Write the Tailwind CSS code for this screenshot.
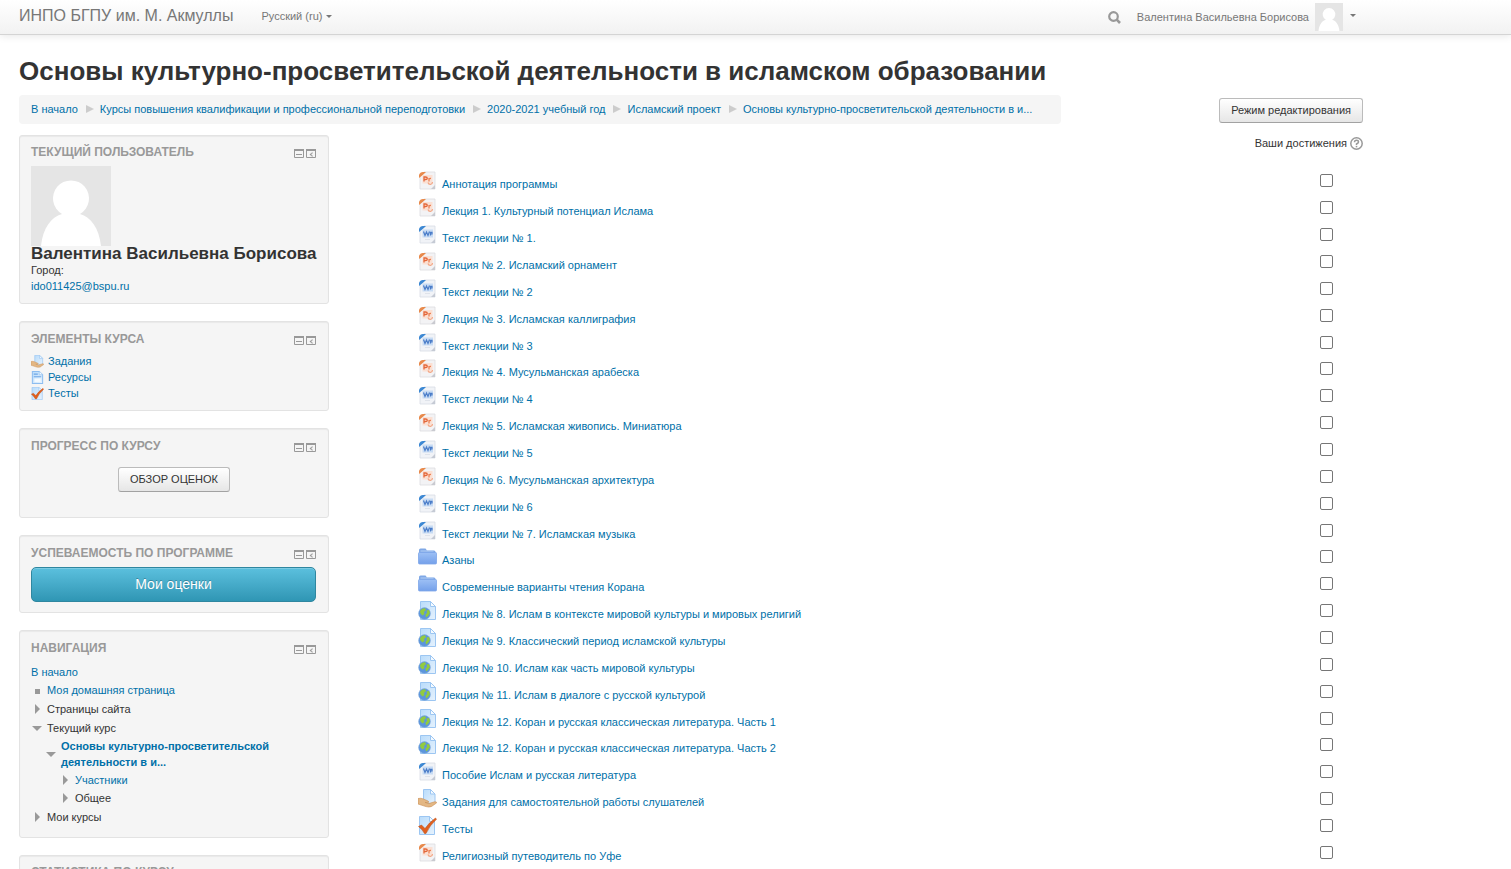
<!DOCTYPE html>
<html lang="ru">
<head>
<meta charset="utf-8">
<title>Основы культурно-просветительской деятельности в исламском образовании</title>
<script src="https://cdn.jsdelivr.net/npm/@tailwindcss/browser@4"></script>
</head>
<body class="h-screen overflow-hidden bg-white font-['Liberation_Sans',Arial,sans-serif] text-[11px] leading-4 text-[#333]">

<svg class="absolute size-0" aria-hidden="true">
  <defs>
    <linearGradient id="sheet" x1="0" y1="0" x2="1" y2="1"><stop offset="0" stop-color="#b9dcfb"/><stop offset="1" stop-color="#e6f2fd"/></linearGradient>
    <linearGradient id="folderFill" x1="0" y1="0" x2="0" y2="1"><stop offset="0" stop-color="#9dc0f5"/><stop offset="1" stop-color="#74a0ea"/></linearGradient>
  </defs>
  <symbol id="ppt" viewBox="0 0 19 19">
    <path d="M6 1H17V18H2V6Z" fill="#f3f3f5" stroke="#dcdce0" stroke-width=".8"/>
    <path d="M1 7V4Q2 1 5 1H8Q5 4 1 7Z" fill="#e88a4c"/>
    <rect x="4.500" y="4" width="10" height="8.500" fill="#fbe0d3"/>
    <path d="M6 10.500V6H7.500Q9.300 6 9.300 7.200T7.500 8.500H6" fill="none" stroke="#e4673a" stroke-width="1.300"/>
    <path d="M11 7V10.500M11 8.200Q11.500 7.300 13 7.500" fill="none" stroke="#ec8256" stroke-width="1.300"/>
    <path d="M10 11.500Q10.500 13.500 12.500 13.300T14.500 11" fill="none" stroke="#f3a785" stroke-width="1.200"/>
    <path d="M13 18L17 14V18Z" fill="#c9cad0"/>
  </symbol>
  <symbol id="doc" viewBox="0 0 19 19">
    <path d="M6 1H17V18H2V6Z" fill="#f1f3f7" stroke="#d8dce4" stroke-width=".8"/>
    <path d="M1 7V4Q2 1 5 1H8Q5 4 1 7Z" fill="#3d88d3"/>
    <rect x="4.500" y="4.500" width="10.500" height="8" fill="#c8dcf4"/>
    <path d="M5.500 6.500L7 10.500L8.500 7L10 10.500L11.500 6.500M12.500 10.500V7.300H14V9H12.500" fill="none" stroke="#4a7cc8" stroke-width="1.200"/>
    <path d="M7 14.500H12" stroke="#dfe3ea"/>
    <path d="M13 18L17 14V18Z" fill="#c5cad4"/>
  </symbol>
  <symbol id="folder" viewBox="0 0 19 19">
    <path d="M1 16V3Q1 1.500 2.500 1.500H7.500L9 3.500H16Q17.500 3.500 17.500 5V7H1Z" fill="#7fa8e6"/>
    <path d="M2.500 4H15.500" stroke="#b5cff6"/>
    <rect x=".5" y="5.500" width="18" height="11.500" rx="1" fill="url(#folderFill)" stroke="#7ea6e8" stroke-width=".8"/>
  </symbol>
  <symbol id="url" viewBox="0 0 19 19">
    <path d="M2.500.5H12.500L17.500 5.500V18.500H2.500Z" fill="url(#sheet)" stroke="#9cc6f2"/>
    <path d="M12.500.5V5.500H17.500Z" fill="#f4faff" stroke="#9cc6f2"/>
    <circle cx="6.500" cy="12.500" r="5.900" fill="#5c95dc" stroke="#86aede" stroke-width=".6"/>
    <path d="M2 10Q4 6.800 7 7.300L8 9L6 11L6.500 13L4.500 14.500L2.500 12.500ZM8.500 9.500L11 9L12 12L10 15L8 16.500L7.500 13.500L9 12ZM3.500 15.500L5 17" fill="#92cb3e"/>
  </symbol>
  <symbol id="assign" viewBox="0 0 19 19">
    <path d="M5.500.5H12.500L17 5V14.500H5.500Z" fill="url(#sheet)" stroke="#9cc6f2"/>
    <path d="M12.500.5V5H17Z" fill="#f4faff" stroke="#9cc6f2"/>
    <path d="M0 9.500Q3 8.800 5.500 10L10 12Q12 13.300 9.500 13.700L7 13.400L11 14.500L16.500 12.800Q19 12.500 18.500 14L13.500 17.500Q11 18.500 8 17.600L0 15Z" fill="#e3b784" stroke="#c98f56" stroke-width=".6"/>
  </symbol>
  <symbol id="quiz" viewBox="0 0 19 19">
    <path d="M1.500.5H11.500L16.500 5.500V18.500H1.500Z" fill="url(#sheet)" stroke="#9cc6f2"/>
    <path d="M11.500.5V5.500H16.500Z" fill="#f4faff" stroke="#9cc6f2"/>
    <path d="M.5 10.500L3.500 9L7 12.500Q11 6.500 17.500 2L18.500 3.300Q12 9 8 17.500H6.500Q4 13 .5 10.500Z" fill="#e0601f" stroke="#b9480f" stroke-width=".5"/>
  </symbol>
  <symbol id="resource" viewBox="0 0 19 19">
    <path d="M2 .8H12L17 5.500V18.200H2Z" fill="url(#sheet)" stroke="#8dbdf0" stroke-width="1.500"/>
    <path d="M12 .8V5.500H17" fill="#f4faff" stroke="#8dbdf0"/>
    <path d="M4 4.500H10M4 8.500H15" stroke="#6fa6e6" stroke-width="1.600"/>
    <path d="M5 11H14V16H5Z" fill="#f4faff"/>
  </symbol>
  <symbol id="hide" viewBox="0 0 10 10">
    <path d="M.5.5H9.500V8.500H.5Z" fill="none" stroke="#999"/><path d="M0 0H10V2H0Z" fill="#999"/><path d="M2 5H8V6H2Z" fill="#999"/>
  </symbol>
  <symbol id="dock" viewBox="0 0 10 10">
    <path d="M.5.5H9.500V8.500H.5Z" fill="none" stroke="#999"/><path d="M0 0H10V2H0Z" fill="#999"/><path d="M6.500 3L3.500 5.500L6.500 8V6.200H5.500V4.800H6.500Z" fill="#999"/>
  </symbol>
  <symbol id="user" viewBox="0 0 80 80">
    <path d="M0 0H80V80H0Z" fill="#e5e5e5"/><path d="M10 80C12 62 20 51 31 48A18 18 0 1 1 49 48C60 51 68 62 70 80Z" fill="#fff"/>
  </symbol>
  <symbol id="closed" viewBox="0 0 10 10"><path d="M3 0L8 5L3 10Z" fill="#999"/></symbol>
  <symbol id="opened" viewBox="0 0 10 10"><path d="M0 3H10L5 8Z" fill="#999"/></symbol>
  <symbol id="leaf" viewBox="0 0 10 10"><path d="M3 4H8V9H3Z" fill="#999"/></symbol>
</svg>

<header class="flex h-[35px] items-center border-b border-[#d4d4d4] bg-linear-to-b from-white to-[#f2f2f2] pl-[19px] pr-[155px] text-[#777] shadow-[0_1px_8px_rgba(0,0,0,0.1)]">
  <a href="#" class="pb-[2px] text-[16px]">ИНПО БГПУ им. М. Акмуллы</a>
  <button class="ml-7 flex items-center gap-1 pb-[2px]">Русский (ru)<span class="border-x-3 border-t-3 border-x-transparent border-t-[#777]"></span></button>
  <button class="ml-auto" aria-label="Поиск"><svg class="size-[13px]" viewBox="0 0 13 13" fill="none" stroke="#999"><circle cx="5.500" cy="5.500" r="4.300" stroke-width="2.200"/><path d="M8.700 8.700L12 12" stroke-width="2.600"/></svg></button>
  <button class="ml-4 flex items-center">Валентина Васильевна Борисова<svg class="ml-[6px] size-7"><use href="#user"/></svg><span class="mb-1 ml-[7px] border-x-3 border-t-3 border-x-transparent border-t-[#777]"></span></button>
</header>

<div class="pl-[19px] pr-[148px]">
  <h1 class="mt-5 text-[26px] font-bold leading-8">Основы культурно-просветительской деятельности в исламском образовании</h1>
  <div class="mt-2 flex items-start">
    <nav aria-label="Навигационная цепочка" class="min-w-[1042px] rounded-sm bg-[#f5f5f5] px-3 pt-[5px] pb-[7px] text-[#0070a8]">
      <ol class="flex h-[17px] items-center gap-2">
        <li><a href="#">В начало</a></li>
        <li class="flex items-center gap-[6px]"><svg class="size-2" viewBox="0 0 8 8"><path d="M0 0L8 4L0 8Z" fill="#ccc"/></svg><a href="#">Курсы повышения квалификации и профессиональной переподготовки</a></li>
        <li class="flex items-center gap-[6px]"><svg class="size-2" viewBox="0 0 8 8"><path d="M0 0L8 4L0 8Z" fill="#ccc"/></svg><a href="#">2020-2021 учебный год</a></li>
        <li class="flex items-center gap-[6px]"><svg class="size-2" viewBox="0 0 8 8"><path d="M0 0L8 4L0 8Z" fill="#ccc"/></svg><a href="#">Исламский проект</a></li>
        <li class="flex items-center gap-[6px]"><svg class="size-2" viewBox="0 0 8 8"><path d="M0 0L8 4L0 8Z" fill="#ccc"/></svg><a href="#">Основы культурно-просветительской деятельности в и...</a></li>
      </ol>
    </nav>
    <button class="mt-[3px] ml-auto rounded-[3px] border border-[#bbb] border-b-[#a2a2a2] bg-linear-to-b from-white to-[#e6e6e6] px-[11px] leading-[23px]">Режим редактирования</button>
  </div>

  <div class="mt-[11px] flex">
    <aside class="flex w-[310px] shrink-0 flex-col gap-[17px]">
      <section class="h-[169px] rounded-[3px] border border-[#e3e3e3] bg-[#f5f5f5] px-[11px] pt-2 shadow-[inset_0_1px_1px_rgba(0,0,0,0.05)]">
        <div class="flex justify-between"><h2 class="text-[12px] font-bold uppercase text-[#999]">Текущий пользователь</h2><span class="mr-px flex gap-[2px] pt-[5px]"><button aria-label="Скрыть блок" class="size-[10px]"><svg class="size-[10px]"><use href="#hide"/></svg></button><button aria-label="В док" class="size-[10px]"><svg class="size-[10px]"><use href="#dock"/></svg></button></span></div>
        <svg class="mt-[6px] size-20"><use href="#user"/></svg>
        <h3 class="text-[17px] font-bold">Валентина Васильевна Борисова</h3>
        <p>Город:</p>
        <a href="#" class="text-[#0070a8]">ido011425@bspu.ru</a>
      </section>

      <section class="h-[90px] rounded-[3px] border border-[#e3e3e3] bg-[#f5f5f5] px-[11px] pt-[9px] shadow-[inset_0_1px_1px_rgba(0,0,0,0.05)]">
        <div class="flex justify-between"><h2 class="text-[12px] font-bold uppercase text-[#999]">Элементы курса</h2><span class="mr-px flex gap-[2px] pt-[5px]"><button aria-label="Скрыть блок" class="size-[10px]"><svg class="size-[10px]"><use href="#hide"/></svg></button><button aria-label="В док" class="size-[10px]"><svg class="size-[10px]"><use href="#dock"/></svg></button></span></div>
        <ul class="mt-[6px] text-[#0070a8]">
          <li><a href="#" class="flex items-center gap-1"><svg class="size-[13px]"><use href="#assign"/></svg>Задания</a></li>
          <li><a href="#" class="flex items-center gap-1"><svg class="size-[13px]"><use href="#resource"/></svg>Ресурсы</a></li>
          <li><a href="#" class="flex items-center gap-1"><svg class="size-[13px]"><use href="#quiz"/></svg>Тесты</a></li>
        </ul>
      </section>

      <section class="h-[90px] rounded-[3px] border border-[#e3e3e3] bg-[#f5f5f5] px-[11px] pt-[9px] shadow-[inset_0_1px_1px_rgba(0,0,0,0.05)]">
        <div class="flex justify-between"><h2 class="text-[12px] font-bold uppercase text-[#999]">Прогресс по курсу</h2><span class="mr-px flex gap-[2px] pt-[5px]"><button aria-label="Скрыть блок" class="size-[10px]"><svg class="size-[10px]"><use href="#hide"/></svg></button><button aria-label="В док" class="size-[10px]"><svg class="size-[10px]"><use href="#dock"/></svg></button></span></div>
        <div class="mt-[13px] text-center"><button class="rounded-[3px] border border-[#bbb] border-b-[#a2a2a2] bg-linear-to-b from-white to-[#e6e6e6] px-[11px] leading-[23px]">ОБЗОР ОЦЕНОК</button></div>
      </section>

      <section class="h-[78px] rounded-[3px] border border-[#e3e3e3] bg-[#f5f5f5] px-[11px] pt-[9px] shadow-[inset_0_1px_1px_rgba(0,0,0,0.05)]">
        <div class="flex justify-between"><h2 class="text-[12px] font-bold uppercase text-[#999]">Успеваемость по программе</h2><span class="mr-px flex gap-[2px] pt-[5px]"><button aria-label="Скрыть блок" class="size-[10px]"><svg class="size-[10px]"><use href="#hide"/></svg></button><button aria-label="В док" class="size-[10px]"><svg class="size-[10px]"><use href="#dock"/></svg></button></span></div>
        <button class="mt-[6px] block w-[285px] rounded-[5px] border border-[#2f87a0] bg-linear-to-b from-[#5bc0de] to-[#2f96b4] text-[14px] leading-[33px] text-white shadow-[inset_0_1px_0_rgba(255,255,255,0.2)] text-shadow-[0_-1px_0_rgba(0,0,0,0.25)]">Мои оценки</button>
      </section>

      <section class="h-[208px] rounded-[3px] border border-[#e3e3e3] bg-[#f5f5f5] px-[11px] pt-[9px] shadow-[inset_0_1px_1px_rgba(0,0,0,0.05)]">
        <div class="flex justify-between"><h2 class="text-[12px] font-bold uppercase text-[#999]">Навигация</h2><span class="mr-px flex gap-[2px] pt-[5px]"><button aria-label="Скрыть блок" class="size-[10px]"><svg class="size-[10px]"><use href="#hide"/></svg></button><button aria-label="В док" class="size-[10px]"><svg class="size-[10px]"><use href="#dock"/></svg></button></span></div>
        <a href="#" class="mt-2 block text-[#0070a8]">В начало</a>
        <ul class="ml-px mt-[2px] flex flex-col gap-[3px]">
          <li class="flex items-center gap-[5px]"><svg class="size-[10px]"><use href="#leaf"/></svg><a href="#" class="text-[#0070a8]">Моя домашняя страница</a></li>
          <li class="flex items-center gap-[5px]"><svg class="size-[10px]"><use href="#closed"/></svg>Страницы сайта</li>
          <li><div class="flex items-center gap-[5px]"><svg class="size-[10px]"><use href="#opened"/></svg>Текущий курс</div>
            <ul class="ml-[14px] mt-[2px] flex flex-col gap-[2px]">
              <li><div class="flex items-center gap-[5px]"><svg class="size-[10px] shrink-0"><use href="#opened"/></svg><a href="#" class="font-bold text-[#0070a8]">Основы культурно-просветительской<br>деятельности в и...</a></div>
                <ul class="ml-[14px] mt-[2px] flex flex-col gap-[2px]">
                  <li class="flex items-center gap-[5px]"><svg class="size-[10px]"><use href="#closed"/></svg><a href="#" class="text-[#0070a8]">Участники</a></li>
                  <li class="flex items-center gap-[5px]"><svg class="size-[10px]"><use href="#closed"/></svg>Общее</li>
                </ul>
              </li>
            </ul>
          </li>
          <li class="flex items-center gap-[5px]"><svg class="size-[10px]"><use href="#closed"/></svg>Мои курсы</li>
        </ul>
      </section>

      <section class="h-[90px] rounded-[3px] border border-[#e3e3e3] bg-[#f5f5f5] px-[11px] pt-2 shadow-[inset_0_1px_1px_rgba(0,0,0,0.05)]">
        <h2 class="text-[12px] font-bold uppercase text-[#999]">Статистика по курсу</h2>
      </section>
    </aside>

    <main class="ml-[89px] grow">
      <div class="flex items-center justify-end gap-[3px]">Ваши достижения
        <button aria-label="Справка"><svg class="size-[13px]" viewBox="0 0 13 13" fill="none" stroke="#999"><circle cx="6.500" cy="6.500" r="5.700" stroke-width="1.500"/><path d="M4.500 5.200Q4.500 3.300 6.500 3.300T8.500 5Q8.500 6 6.500 7V8" stroke-width="1.500"/><path d="M5.700 9.600H7.300" stroke-width="1.500"/></svg></button>
      </div>
      <ul id="activities" class="mt-5"></ul>
    </main>
  </div>
</div>

<script>
const activities = [
  ["ppt", "Аннотация программы"],
  ["ppt", "Лекция 1. Культурный потенциал Ислама"],
  ["doc", "Текст лекции № 1."],
  ["ppt", "Лекция № 2. Исламский орнамент"],
  ["doc", "Текст лекции № 2"],
  ["ppt", "Лекция № 3. Исламская каллиграфия"],
  ["doc", "Текст лекции № 3"],
  ["ppt", "Лекция № 4. Мусульманская арабеска"],
  ["doc", "Текст лекции № 4"],
  ["ppt", "Лекция № 5. Исламская живопись. Миниатюра"],
  ["doc", "Текст лекции № 5"],
  ["ppt", "Лекция № 6. Мусульманская архитектура"],
  ["doc", "Текст лекции № 6"],
  ["doc", "Текст лекции № 7. Исламская музыка"],
  ["folder", "Азаны"],
  ["folder", "Современные варианты чтения Корана"],
  ["url", "Лекция № 8. Ислам в контексте мировой культуры и мировых религий"],
  ["url", "Лекция № 9. Классический период исламской культуры"],
  ["url", "Лекция № 10. Ислам как часть мировой культуры"],
  ["url", "Лекция № 11. Ислам в диалоге с русской культурой"],
  ["url", "Лекция № 12. Коран и русская классическая литература. Часть 1"],
  ["url", "Лекция № 12. Коран и русская классическая литература. Часть 2"],
  ["doc", "Пособие Ислам и русская литература"],
  ["assign", "Задания для самостоятельной работы слушателей"],
  ["quiz", "Тесты"],
  ["ppt", "Религиозный путеводитель по Уфе"]
];
document.getElementById("activities").innerHTML = activities.map(([icon, name], i) => `
  <li class="flex h-[27px] items-start justify-between pr-[30px] nth-[7n]:h-[26px]">
    <a id="activity${i}" href="#" class="flex gap-[5px] leading-[27px] text-[#0070a8]"><svg class="size-[19px]"><use href="#${icon}"/></svg>${name}</a>
    <input type="checkbox" aria-labelledby="activity${i}" class="mt-[3px] size-[13px] appearance-none rounded-[2px] border border-[#767676] bg-white">
  </li>`).join("");
</script>
</body>
</html>
